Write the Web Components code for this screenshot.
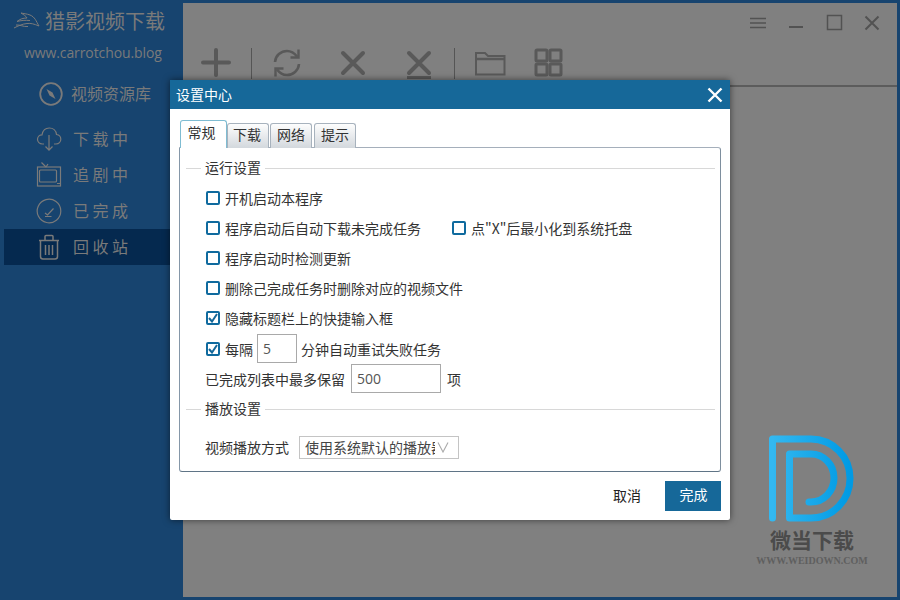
<!DOCTYPE html>
<html lang="zh">
<head>
<meta charset="utf-8">
<title>设置中心</title>
<style>
    html, body { margin: 0; height: 100%; }
    body { font-family: "Noto Sans CJK SC", sans-serif; overflow: hidden; }
</style>
</head>
<body>
<app-shell>
    <side-nav slot="side">
        <nav-item label="下载中">
            <svg width="26" height="26" viewBox="0 0 26 26" fill="none" stroke="currentColor" stroke-width="1.2"><path d="M8 18H6.500C3.500 18 1.500 15.800 1.500 13.300S3.500 8.800 6 8.800C6.800 4.500 9.800 2 13.300 2 17 2 20 4.600 20.500 8.500 23 8.800 24.800 10.800 24.800 13.300S22.800 18 20 18H18"/><path d="M13 9V24M9.500 20.500L13 24.200 16.500 20.500"/></svg>
        </nav-item>
        <nav-item label="追剧中">
            <svg width="26" height="26" viewBox="0 0 26 26" fill="none" stroke="currentColor" stroke-width="1.2"><rect x="1.500" y="5" width="23" height="19"/><rect x="3.500" y="8" width="17" height="12" rx="1"/><path d="M5.500 .5L10 5M12 2L10 5M21 21.500H24"/></svg>
        </nav-item>
        <nav-item label="已完成">
            <svg width="26" height="26" viewBox="0 0 26 26" fill="none" stroke="currentColor" stroke-width="1.2"><path d="M20 3.500A11.800 11.800 0 1 0 24.800 13 11.800 11.800 0 0 0 20 3.500"/><path d="M9 15L11.500 17 17.500 10.500M9 18.500H15.500"/></svg>
        </nav-item>
        <nav-item label="回收站" active>
            <svg width="26" height="26" viewBox="0 0 26 26" fill="none" stroke="currentColor" stroke-width="1.500"><path d="M3 6.500H23M9 6V2.500C9 1.800 9.500 1.500 10 1.500H16C16.500 1.500 17 1.800 17 2.500V6"/><path d="M4.500 7V22.500C4.500 24 5.500 25 7 25H19C20.500 25 21.500 24 21.500 22.500V7"/><path d="M9.500 11V21M13 11V21M16.500 11V21"/></svg>
        </nav-item>
    </side-nav>
    <tool-bar slot="main"></tool-bar>
</app-shell>

<settings-dialog>
    <section-head>运行设置</section-head>
    <check-row style="margin-top:5px">开机启动本程序</check-row>
    <form-row>
        <check-row style="margin-left:1px">程序启动后自动下载未完成任务</check-row>
        <check-row style="margin-left:31px">点"X"后最小化到系统托盘</check-row>
    </form-row>
    <check-row>程序启动时检测更新</check-row>
    <check-row>删除己完成任务时删除对应的视频文件</check-row>
    <check-row checked>隐藏标题栏上的快捷输入框</check-row>
    <check-row checked style="margin-top:1px">
        每隔<field-box width="40" value="5" style="margin:0 4px"></field-box>分钟自动重试失败任务
    </check-row>
    <form-row tight>已完成列表中最多保留<field-box width="90" value="500" style="margin:0 6px"></field-box>项</form-row>
    <section-head style="margin-top:6px">播放设置</section-head>
    <form-row style="margin-top:13px">视频播放方式<select-box value="使用系统默认的播放器"></select-box></form-row>
</settings-dialog>

<weidown-mark></weidown-mark>

<script>
class AppShell extends HTMLElement {
    constructor() {
        super();
        this.attachShadow({ mode: 'open' });
        this.shadowRoot.innerHTML = `
            <style>
                :host { display: flex; width: 900px; height: 600px; background: #17446f; }
                .side { flex: 0 0 183px; }
                .main { flex: 1; margin: 3px 3px 3px 0; background: #808080; }
            </style>
            <div class="side"><slot name="side"></slot></div>
            <div class="main"><slot name="main"></slot></div>
        `;
    }
}

class SideNav extends HTMLElement {
    constructor() {
        super();
        this.attachShadow({ mode: 'open' });
        this.shadowRoot.innerHTML = `
            <style>
                :host { display: block; color: #7a7a7a; }
                .brand { display: flex; align-items: center; height: 42px; padding-left: 13px; font-size: 20px; line-height: 1; }
                .brand svg { margin-right: 5px; }
                .site { height: 22px; padding-left: 24px; font: 14px/22px "Open Sans", sans-serif; letter-spacing: -.1px; }
                .library { display: flex; align-items: center; height: 36px; margin-top: 12px; padding-left: 39px; font-size: 16px; }
                .library svg { margin-right: 8px; }
                .library span { padding-bottom: 2px; }
                .items { margin-top: 9px; }
            </style>
            <div class="brand">
                <svg width="27" height="18" viewBox="0 0 27 18" fill="none" stroke="currentColor" stroke-width="1"><path d="M1 16C5 14 9 12 14 11.500 18 11 21 12 26 14 23 9 22 5 17 3 14 1.800 10 1.500 8 1 11 3 13 4 14 6 10 6 7 7 4 9.500 8 8.500 12 8 17 8.500"/><path d="M3 13C7 12.500 10 15 15 14.500"/></svg>
                <span>猎影视频下载</span>
            </div>
            <div class="site">www.carrotchou.blog</div>
            <div class="library">
                <svg width="24" height="24" viewBox="0 0 24 24" fill="none" stroke="currentColor" stroke-width="1.800"><circle cx="12" cy="12" r="10.800"/><path d="M7.500 7L13.500 10.500 16.500 17 10.500 13.500Z" fill="currentColor" stroke="none"/></svg>
                <span>视频资源库</span>
            </div>
            <div class="items"><slot></slot></div>
        `;
    }
}

class NavItem extends HTMLElement {
    constructor() {
        super();
        this.attachShadow({ mode: 'open' });
    }

    connectedCallback() {
        this.shadowRoot.innerHTML = `
            <style>
                :host { display: flex; align-items: center; height: 36px; margin-left: 4px; padding-left: 32px; font-size: 16px; letter-spacing: 3.5px; }
                :host([active]) { background: #05294f; }
                .icon { display: flex; width: 26px; margin-right: 11px; }
                .label { padding-bottom: 2px; }
            </style>
            <span class="icon"><slot></slot></span>
            <span class="label">${this.getAttribute('label') || ''}</span>
        `;
    }
}

class ToolBar extends HTMLElement {
    constructor() {
        super();
        this.attachShadow({ mode: 'open' });
        this.shadowRoot.innerHTML = `
            <style>
                :host { display: block; color: #595959; }
                .win { display: flex; justify-content: flex-end; align-items: center; height: 40px; padding-right: 15px; color: #525252; }
                .win svg { margin-left: 18px; }
                .tools { display: flex; align-items: center; height: 40px; padding: 0 0 0 13px; }
                .tools svg { display: block; }
                .tools svg + svg { margin-left: 26px; }
                .sep { width: 1px; height: 31px; margin: 0 15px; background: #555; }
                .gap18 { margin-left: 18px !important; }
                .line { height: 2px; margin-top: 2px; background: #5c5c5c; }
            </style>
            <div class="win">
                <svg width="20" height="20" viewBox="0 0 20 20" fill="none" stroke="currentColor" stroke-width="1.500"><path d="M2 5.500H18M2 10H18M2 14.500H18"/></svg>
                <svg width="20" height="20" viewBox="0 0 20 20" fill="none" stroke="currentColor" stroke-width="2"><path d="M3 14H17"/></svg>
                <svg width="20" height="20" viewBox="0 0 20 20" fill="none" stroke="currentColor" stroke-width="1.500"><rect x="3.500" y="2.500" width="14" height="14"/></svg>
                <svg width="20" height="20" viewBox="0 0 20 20" fill="none" stroke="currentColor" stroke-width="2"><path d="M3.500 3.500L16.500 16.500M16.500 3.500L3.500 16.500"/></svg>
            </div>
            <div class="tools">
                <svg width="40" height="40" viewBox="0 0 40 40" fill="none" stroke="currentColor" stroke-width="4" stroke-linecap="round"><path d="M7 19.500H33M20 7V32"/></svg>
                <span class="sep"></span>
                <svg width="40" height="40" viewBox="0 0 40 40" fill="none" stroke="currentColor" stroke-width="2.600"><path d="M8 19C8.500 12.500 14 8 20 8 24 8 27 9.500 30 13.500M32 21C31.500 27.500 26 32 20 32 16 32 13 30.500 10 26.500"/><path d="M23.500 14.500H31.500V6.500M16.500 25.500H8.500V33.500" stroke-width="2.400"/></svg>
                <svg width="40" height="40" viewBox="0 0 40 40" fill="none" stroke="currentColor" stroke-width="4" stroke-linecap="round"><path d="M10 10L30 30M30 10L10 30"/></svg>
                <svg width="40" height="40" viewBox="0 0 40 40" fill="none" stroke="currentColor" stroke-width="4"><path d="M10 10L30 30M30 10L10 30" stroke-linecap="round"/><path d="M8 34.500H32" stroke-width="3"/></svg>
                <span class="sep"></span>
                <svg width="40" height="40" viewBox="0 0 40 40" fill="none" stroke="currentColor" stroke-width="2"><path d="M6 31.500V10H15L18 13H34.500V31.500Z"/><path d="M6 16H34.500" stroke-width="2.500"/></svg>
                <svg class="gap18" width="40" height="40" viewBox="0 0 40 40" fill="none" stroke="currentColor" stroke-width="3"><rect x="8" y="7" width="11" height="11" rx="1"/><rect x="22" y="7" width="11" height="11" rx="1"/><rect x="8" y="21" width="11" height="11" rx="1"/><rect x="22" y="21" width="11" height="11" rx="1"/></svg>
            </div>
            <div class="line"></div>
        `;
    }
}

class SettingsDialog extends HTMLElement {
    constructor() {
        super();
        this.attachShadow({ mode: 'open' });
        this.shadowRoot.innerHTML = `
            <style>
                :host { position: absolute; left: 170px; top: 80px; width: 560px; height: 440px; display: flex; flex-direction: column; background: #fff; color: #333; font-size: 14px; box-shadow: 0 0 7px rgba(0,0,0,.55); border-radius: 0 0 2px 2px; }
                .title { display: flex; align-items: center; justify-content: space-between; height: 29px; padding: 0 6px 0 6px; background: #166899; color: #fff; }
                .title span { padding-bottom: 2px; }
                .title svg { display: block; }
                .body { flex: 1; padding: 11px 9px 0; display: flex; flex-direction: column; }
                .tabs { display: flex; align-items: flex-end; height: 28px; margin-bottom: -1px; position: relative; z-index: 1; }
                .tab { box-sizing: border-box; height: 25px; margin-left: 1px; width: 42px; text-align: center; line-height: 21px; border: 1px solid #a7b2bd; border-bottom: 0; border-radius: 3px 3px 0 0; background: linear-gradient(#fdfdfd, #d3d8dd); color: #333; }
                .tab.on { height: 28px; width: 47px; margin-left: 1px; padding-right: 4px; line-height: 23px; border-color: #7fbcd2; background: #fff; }
                .tab.on + .tab { margin-left: 0; padding-right: 2px; }
                .tab:last-child { margin-left: 2px; }
                .panel { box-sizing: border-box; height: 325px; padding: 0 5px 0 6px; border: 1px solid #a5afbb; border-left-color: #8597a8; border-bottom-color: #5f7486; border-right-color: #7e8f9e; border-radius: 0 3px 3px 3px; }
                .foot { display: flex; align-items: center; justify-content: flex-end; height: 30px; margin-top: 9px; }
                .cancel { margin-right: 24px; padding-bottom: 3px; color: #222; }
                .done { box-sizing: border-box; width: 56px; height: 30px; padding-left: 1px; line-height: 27px; text-align: center; background: #166899; color: #fff; }
            </style>
            <div class="title">
                <span>设置中心</span>
                <svg width="18" height="18" viewBox="0 0 18 18" fill="none" stroke="#fff" stroke-width="2.400"><path d="M2.500 2.500L15.500 15.500M15.500 2.500L2.500 15.500"/></svg>
            </div>
            <div class="body">
                <div class="tabs">
                    <span class="tab on">常规</span><span class="tab">下载</span><span class="tab">网络</span><span class="tab">提示</span>
                </div>
                <div class="panel"><slot></slot></div>
                <div class="foot">
                    <span class="cancel">取消</span>
                    <span class="done">完成</span>
                </div>
            </div>
        `;
    }
}

class SectionHead extends HTMLElement {
    constructor() {
        super();
        this.attachShadow({ mode: 'open' });
        this.shadowRoot.innerHTML = `
            <style>
                :host { display: flex; align-items: center; height: 20px; margin-top: 10px; color: #333; font-size: 14px; }
                .rule { height: 1px; background: #d8d8d8; }
                .rule.a { width: 15px; }
                .rule.b { flex: 1; }
                .text { padding: 0 4px 2px; }
            </style>
            <span class="rule a"></span><span class="text"><slot></slot></span><span class="rule b"></span>
        `;
    }
}

class CheckRow extends HTMLElement {
    constructor() {
        super();
        this.attachShadow({ mode: 'open' });
    }

    connectedCallback() {
        const mark = this.hasAttribute('checked')
            ? '<svg width="10" height="10" viewBox="0 0 10 10" fill="none" stroke="#166899" stroke-width="2"><path d="M1 5L4 8.500 9 1"/></svg>'
            : '';
        this.shadowRoot.innerHTML = `
            <style>
                :host { display: flex; align-items: center; height: 30px; margin-left: 20px; color: #333; font-size: 14px; white-space: nowrap; }
                .box { box-sizing: border-box; display: flex; align-items: center; justify-content: center; width: 14px; height: 14px; margin-right: 5px; border: 2px solid #0f6a9e; border-radius: 2px; }
                .text { display: flex; align-items: center; padding-bottom: 1px; }
            </style>
            <span class="box">${mark}</span>
            <span class="text"><slot></slot></span>
        `;
    }
}

class FormRow extends HTMLElement {
    constructor() {
        super();
        this.attachShadow({ mode: 'open' });
    }

    connectedCallback() {
        this.shadowRoot.innerHTML = `
            <style>
                :host { display: flex; align-items: center; height: 30px; margin-left: 19px; color: #333; font-size: 14px; white-space: nowrap; }
                :host([tight]) { height: 29px; }
            </style>
            <slot></slot>
        `;
    }
}

class FieldBox extends HTMLElement {
    constructor() {
        super();
        this.attachShadow({ mode: 'open' });
    }

    connectedCallback() {
        this.shadowRoot.innerHTML = `
            <style>
                :host { box-sizing: border-box; display: block; width: ${this.getAttribute('width')}px; height: 29px; padding-left: 5px; border: 1px solid #a9a9a9; color: #555; font: 14px/27px "Open Sans", sans-serif; }
            </style>
            <span>${this.getAttribute('value')}</span>
        `;
    }
}

class SelectBox extends HTMLElement {
    constructor() {
        super();
        this.attachShadow({ mode: 'open' });
    }

    connectedCallback() {
        this.shadowRoot.innerHTML = `
            <style>
                :host { box-sizing: border-box; display: flex; align-items: center; width: 160px; height: 23px; margin-left: 10px; padding-left: 5px; border: 1px solid #c4c4c4; color: #444; font-size: 14px; }
                .value { width: 130px; overflow: hidden; white-space: nowrap; line-height: 19px; }
                svg { margin-left: 2px; }
            </style>
            <span class="value">${this.getAttribute('value')}</span>
            <svg width="12" height="12" viewBox="0 0 12 12" fill="none" stroke="#aaa" stroke-width="1.100"><path d="M1 1.500L6 11 11 1.500"/></svg>
        `;
    }
}

class WeidownMark extends HTMLElement {
    constructor() {
        super();
        this.attachShadow({ mode: 'open' });
        this.shadowRoot.innerHTML = `
            <style>
                :host { position: absolute; left: 750px; top: 432px; width: 124px; display: flex; flex-direction: column; align-items: center; }
                svg { display: block; }
                .name { margin-top: 4px; color: #4b4b4b; font-size: 21px; line-height: 26px; font-weight: 700; }
                .url { margin-top: 1px; color: #5f5f5f; font: 700 10px/16px "Liberation Serif", serif; white-space: nowrap; }
            </style>
            <svg width="90" height="90" viewBox="0 0 90 90" fill="none">
                <defs><linearGradient id="g" x1="0" x2="1" y1="0" y2="0"><stop offset="0" stop-color="#33b8f0"/><stop offset="1" stop-color="#009ae4"/></linearGradient></defs>
                <path d="M5.500 86V7H44A39 39.500 0 0 1 44 86H22.500V22H44A23 24 0 0 1 44 70H42" stroke="url(#g)" stroke-width="7" stroke-linecap="round" stroke-linejoin="round"/>
            </svg>
            <div class="name">微当下载</div>
            <div class="url">WWW.WEIDOWN.COM</div>
        `;
    }
}

customElements.define('app-shell', AppShell);
customElements.define('side-nav', SideNav);
customElements.define('nav-item', NavItem);
customElements.define('tool-bar', ToolBar);
customElements.define('settings-dialog', SettingsDialog);
customElements.define('section-head', SectionHead);
customElements.define('check-row', CheckRow);
customElements.define('form-row', FormRow);
customElements.define('field-box', FieldBox);
customElements.define('select-box', SelectBox);
customElements.define('weidown-mark', WeidownMark);
</script>
</body>
</html>
